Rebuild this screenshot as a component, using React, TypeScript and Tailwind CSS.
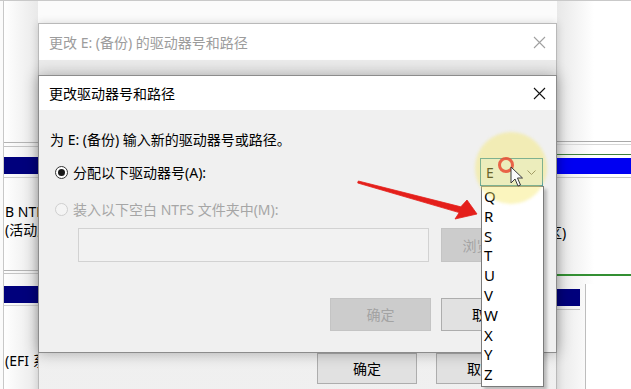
import { type ReactNode } from 'react';

const letters = ['Q', 'R', 'S', 'T', 'U', 'V', 'W', 'X', 'Y', 'Z'];

function CloseIcon({ color }: { color: string }) {
  return (
    <svg width="13" height="13" viewBox="0 0 13 13">
      <path d="M1 1 L12 12 M12 1 L1 12" stroke={color} strokeWidth="1.1" fill="none" />
    </svg>
  );
}

function WinButton({
  children,
  disabled,
  className = '',
}: {
  children: ReactNode;
  disabled?: boolean;
  className?: string;
}) {
  return (
    <div
      className={`flex h-full items-center justify-center border ${
        disabled
          ? 'border-[#c4c4c4] bg-[#cccccc] text-[#a3a3a3]'
          : 'border-[#adadad] bg-[#e1e1e1] text-black'
      } ${className}`}
    >
      {children}
    </div>
  );
}

function DiskBackground() {
  return (
    <div className="flex h-full w-full border-t border-[#c9c9c9]">
      {/* left partition strip */}
      <div className="ml-[3px] flex w-[35px] flex-col border-l border-[#c8c8c8] bg-gradient-to-r from-white to-[#e9e9e9]">
        <div className="mt-[141px] h-px bg-[#b3b3b3]" />
        <div className="mt-[3px] h-px bg-[#c4c4c4]" />
        <div className="mt-[10px] h-[17px] bg-[#00007c]" />
        <div className="mt-[3px] h-px bg-[#cfcfcf]" />
        <div className="mt-[25px] whitespace-nowrap pl-[1px] leading-[18px]">
          <div>B NTFS</div>
          <div>(活动, 主分区)</div>
        </div>
        <div className="mt-[31px] h-px bg-[#b3b3b3]" />
        <div className="mt-[2px] h-px bg-[#c4c4c4]" />
        <div className="mt-[12px] h-[17px] bg-[#00007c]" />
        <div className="mt-[2px] h-px bg-[#cfcfcf]" />
        <div className="mt-[46px] whitespace-nowrap pl-[1px] leading-[18px]">(EFI 系统分区)</div>
      </div>

      <div className="flex-1" />

      {/* right partition strip */}
      <div className="flex w-[74px] flex-col bg-gradient-to-r from-[#e8e8e8] via-white to-white">
        <div className="mt-[140px] h-px bg-[#a9a9a9]" />
        <div className="mt-[2px] h-px bg-[#d6d6d6]" />
        <div className="mt-[9px] h-px bg-[#3c7f3c]" />
        <div className="mt-[3px] h-[16px] bg-[#0000f2]" />
        <div className="mt-[3px] h-px bg-[#c4c4c4]" />
        <div className="-ml-[9px] mt-[46px] whitespace-nowrap leading-[18px]">区)</div>
        <div className="mt-[32px] h-[2px] bg-[#338f33]" />
        <div className="mt-[8px] flex flex-1">
          <div className="flex w-[28px] flex-col">
            <div className="mt-[5px] h-[17px] w-[23px] bg-[#00007c]" />
            <div className="mt-[3px] h-px w-[23px] bg-[#c4c4c4]" />
          </div>
          <div className="flex-1 border-l border-[#bdbdbd] bg-white" />
        </div>
      </div>
    </div>
  );
}

function OuterDialog() {
  return (
    <div className="absolute left-[38px] top-[23px] flex h-[380px] w-[519px] flex-col border border-[#b9b9b9] bg-[#f0f0f0] shadow-[0_0_8px_rgba(0,0,0,0.15)]">
      <div className="flex h-[36px] items-center justify-between bg-white pl-[10px] pr-[10px] text-[#9c9c9c]">
        <span>更改 E: (备份) 的驱动器号和路径</span>
        <CloseIcon color="#a0a0a0" />
      </div>
      <div className="flex flex-1 flex-col bg-gradient-to-b from-[#ebebeb] to-[#f0f0f0] pt-[293px]">
        <div className="flex h-[31px] justify-end gap-[19px] pr-[30px]">
          <WinButton className="w-[100px]">确定</WinButton>
          <WinButton className="w-[90px]">取消</WinButton>
        </div>
      </div>
    </div>
  );
}

function InnerDialog() {
  return (
    <div className="absolute left-[38px] top-[75px] flex h-[278px] w-[519px] flex-col border border-[#8c8c8c] bg-[#f0f0f0] shadow-[0_0_14px_rgba(0,0,0,0.3)]">
      <div className="flex h-[34px] shrink-0 items-center justify-between bg-white pl-[10px] pr-[10px]">
        <span>更改驱动器号和路径</span>
        <CloseIcon color="#111" />
      </div>
      <div className="flex flex-col pl-[11px] pr-[13px]">
        <div className="mt-[21px] leading-[18px]">为 E: (备份) 输入新的驱动器号或路径。</div>

        <div className="mt-[9px] flex h-[28px] items-center">
          <div className="ml-[5px] flex h-[13px] w-[13px] items-center justify-center rounded-full border border-[#333] bg-white">
            <div className="h-[7px] w-[7px] rounded-full bg-[#1a1a1a]" />
          </div>
          <span className="ml-[5px]">分配以下驱动器号(A):</span>
          <div className="ml-auto flex h-[28px] w-[63px] items-center justify-between border border-[#2a8ab0] bg-[#e5f1fb] pl-[5px] pr-[6px]">
            <span>E</span>
            <svg width="9" height="5" viewBox="0 0 9 5">
              <path d="M0.5 0.5 L4.5 4.5 L8.5 0.5" stroke="#666" fill="none" strokeWidth="1" />
            </svg>
          </div>
        </div>

        <div className="mt-[13px] flex h-[20px] items-center text-[#a6a6a6]">
          <div className="ml-[5px] h-[13px] w-[13px] rounded-full border border-[#cfcfcf] bg-[#f4f4f4]" />
          <span className="ml-[5px]">装入以下空白 NTFS 文件夹中(M):</span>
        </div>

        <div className="mt-[9px] flex h-[34px]">
          <div className="ml-[28px] w-[351px] border border-[#d2d2d2] bg-[#f2f2f2]" />
          <WinButton disabled className="ml-[12px] w-[100px]">
            浏览(B)...
          </WinButton>
        </div>

        <div className="mt-[36px] flex h-[33px] justify-end gap-[10px] pr-[12px]">
          <WinButton disabled className="w-[101px]">
            确定
          </WinButton>
          <WinButton className="w-[90px]">取消</WinButton>
        </div>
      </div>
    </div>
  );
}

function DropdownList() {
  return (
    <div className="absolute left-[481px] top-[186px] h-[201px] w-[63px] border border-[#7b7b7b] bg-white pl-[2px] shadow-[3px_3px_3px_rgba(0,0,0,0.22)]">
      {letters.map((l) => (
        <div key={l} className="h-[19.8px] text-[15px] leading-[19.8px]">
          {l}
        </div>
      ))}
    </div>
  );
}

function Annotations() {
  return (
    <>
      {/* cursor highlight */}
      <div className="pointer-events-none absolute left-[475px] top-[132px] h-[72px] w-[72px] rounded-full bg-[rgba(245,232,100,0.42)] blur-[1.5px]" />
      {/* click ring */}
      <div className="pointer-events-none absolute left-[498px] top-[157px] h-[16px] w-[16px] rounded-full border-[3px] border-[rgba(232,80,55,0.88)]" />
      {/* mouse pointer */}
      <svg className="pointer-events-none absolute left-[510px] top-[166px]" width="14" height="22" viewBox="0 0 14 22">
        <path
          d="M1 1 L1 17 L5 13 L8 20 L10.5 19 L7.5 12 L12.5 12 Z"
          fill="#fafafa"
          stroke="#3a3a3a"
          strokeWidth="1"
          strokeLinejoin="round"
        />
      </svg>
      {/* red arrow */}
      <svg className="pointer-events-none absolute left-[355px] top-[178px]" width="125" height="45" viewBox="0 0 125 45">
        <polygon
          points="3.3,3 105.8,28.8 112,22 122,36 100,41 104.2,34.6 2.7,5"
          fill="#e41f1b"
          stroke="#e41f1b"
          strokeWidth="0.8"
          strokeLinejoin="round"
        />
      </svg>
    </>
  );
}

export default function App() {
  return (
    <div className="relative h-[389px] w-[631px] overflow-hidden bg-[#fbfbfb] font-['Noto_Sans','Noto_Sans_CJK_SC',sans-serif] text-[14px] text-black">
      <DiskBackground />
      <OuterDialog />
      <InnerDialog />
      <DropdownList />
      <Annotations />
    </div>
  );
}
